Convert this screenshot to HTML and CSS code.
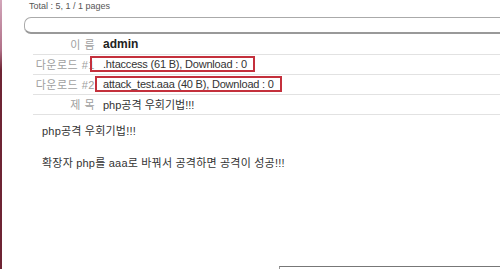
FILE: index.html
```html
<!DOCTYPE html>
<html lang="ko">
<head>
  <meta charset="UTF-8" />
  <title>게시판 보기</title>
  <link rel="stylesheet" href="styles.css">
</head>
<body>
  <div class="page">
    <div class="total">Total : 5, 1 / 1 pages</div>
    <div class="search-bar"></div>

    <table class="view">
      <tr>
        <th>이 름</th>
        <td><b>admin</b></td>
      </tr>
      <tr>
        <th>다운로드 #1</th>
        <td><span class="mark mark-1">.htaccess (61 B), Download : 0</span></td>
      </tr>
      <tr>
        <th>다운로드 #2</th>
        <td><span class="mark mark-2">attack_test.aaa (40 B), Download : 0</span></td>
      </tr>
      <tr>
        <th>제 목</th>
        <td>php공격 우회기법!!!</td>
      </tr>
    </table>

    <div class="content">
      <p>php공격 우회기법!!!</p>
      <p>확장자 php를 aaa로 바꿔서 공격하면 공격이 성공!!!</p>
    </div>

    <div class="bottom-box"></div>
  </div>
</body>
</html>
```

FILE: styles.css
```css
html, body {
  margin: 0;
  height: 100%;
  overflow: hidden;
  background: #fff;
}

body {
  font-family: "Liberation Sans", "Noto Sans CJK KR", sans-serif;
  font-size: 11px;
  color: #333;
}

.page {
  height: 269px;
  padding-left: 3px;
  background: linear-gradient(to bottom, #d2a6ba 0, #b07088 50px, #6e2434 70px, #6e2434 100%) left top / 2px 100% no-repeat;
  position: relative;
}

.total {
  padding: 1px 0 0 26px;
  height: 13px;
  font-size: 9px;
  color: #555;
}

.search-bar {
  margin: 3px 0 0 21px;
  height: 14px;
  border: 1px solid #aaa;
  border-bottom: 2px solid #999;
  border-right: none;
  border-radius: 7px 0 0 7px;
  background: #fff;
}

.view {
  margin-left: 30px;
  width: calc(100% - 30px);
  border-collapse: collapse;
}

.view tr {
  height: 20px;
  border-bottom: 1px solid #e2e2e2;
}

.view th {
  width: 62px;
  padding: 0 5px 0 0;
  text-align: right;
  font-weight: normal;
  color: #a0a0a0;
  white-space: nowrap;
  letter-spacing: 0.5px;
}

.view td {
  padding: 0 0 0 3px;
  color: #333;
}

.view b {
  color: #222;
  font-size: 12px;
}

.mark {
  display: inline-block;
  border: 2px solid #c4303c;
  line-height: 12px;
  padding-right: 6px;
  letter-spacing: -0.2px;
}

.mark-1 {
  margin-left: -13px;
  padding-left: 11px;
}

.mark-2 {
  margin-left: -8px;
  padding-left: 6px;
}

.content {
  padding: 9px 0 0 39px;
  color: #333;
  letter-spacing: 0.2px;
}

.content p {
  margin: 0 0 18px;
  line-height: 14px;
}

.bottom-box {
  position: absolute;
  left: 279px;
  right: 0;
  top: 266px;
  height: 10px;
  border-top: 1px solid #777;
  border-left: 1px solid #999;
}
```
